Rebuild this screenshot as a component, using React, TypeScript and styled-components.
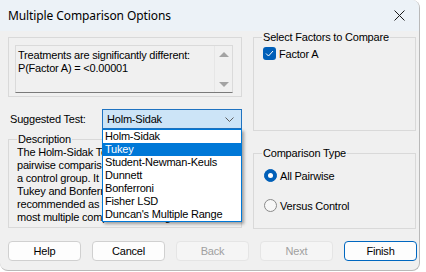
import React from "react";
import styled, {createGlobalStyle} from "styled-components";

const GlobalStyle = createGlobalStyle`
  html, body {
    margin: 0;
    padding: 0;
    background: #ffffff;
  }
  body {
    font-family: "Liberation Sans", Arial, sans-serif;
    font-size: 11px;
    color: #000000;
  }
`

const Window = styled.div`
  width: 420px;
  height: 271px;
  box-sizing: border-box;
  display: flex;
  flex-direction: column;
  background: #f0f0f0;
  border-right: 1px solid #b9b9b9;
  border-bottom: 1px solid #b9b9b9;
  border-radius: 0 8px 8px 8px;
  overflow: hidden;
  letter-spacing: -0.2px;
`

const TitleBar = styled.div`
  height: 31px;
  flex: none;
  display: flex;
  align-items: center;
  justify-content: space-between;
  padding: 0 10px 0 8px;
  background: #ecf2f7;
  font-family: "Noto Sans", "Open Sans", sans-serif;
  font-size: 12px;
  letter-spacing: -0.1px;
`

const CloseButton = styled.div`
  width: 20px;
  height: 20px;
  display: flex;
  align-items: center;
  justify-content: center;
`

const Body = styled.div`
  display: grid;
  grid-template-columns: 234px 163px;
  column-gap: 11px;
  padding: 0 0 0 8px;
`

const LeftColumn = styled.div`
  display: flex;
  flex-direction: column;
  padding-top: 6px;
`

const RightColumn = styled.div`
  display: flex;
  flex-direction: column;
`

const ResultsFrame = styled.div`
  height: 60px;
  box-sizing: border-box;
  border: 1px solid #d9d9d9;
  padding: 7px 8px 3px 6px;
`

const ResultsBox = styled.div`
  height: 48px;
  box-sizing: border-box;
  display: flex;
  border: 1px solid #dadada;
  border-bottom-color: #7a7a7a;
`

const ResultsText = styled.div`
  flex: 1;
  padding: 3px 0 0 2px;
  line-height: 13px;
`

const ScrollBar = styled.div`
  width: 17px;
  display: flex;
  flex-direction: column;
  justify-content: space-between;
  align-items: center;
  padding: 6px 0 5px;
  border-left: 1px solid #e6e6e6;
`

const Arrow = styled.div<{ $down?: boolean }>`
  width: 0;
  height: 0;
  border-left: 5px solid transparent;
  border-right: 5px solid transparent;
  ${p => p.$down ? "border-top: 5px solid #a3a3a3;" : "border-bottom: 5px solid #a3a3a3;"}
`

const TestRow = styled.div`
  display: flex;
  align-items: center;
  margin-top: 12px;
  padding-left: 2px;
`

const TestLabel = styled.span`
  width: 92px;
`

const ComboWrap = styled.div`
  position: relative;
  width: 140px;
  z-index: 2;
`

const Combo = styled.div`
  height: 20px;
  box-sizing: border-box;
  display: flex;
  align-items: center;
  justify-content: space-between;
  padding: 0 7px 0 4px;
  background: #cce4f7;
  border: 1px solid #1f73c1;
`

const DropList = styled.ul`
  position: absolute;
  top: 100%;
  left: 0;
  width: 140px;
  box-sizing: border-box;
  margin: 0;
  padding: 0;
  list-style: none;
  background: #ffffff;
  border: 1px solid #0078d7;
  box-shadow: 2px 2px 3px rgba(0, 0, 0, 0.35);
`

const DropItem = styled.li<{ $selected?: boolean }>`
  height: 13px;
  line-height: 13px;
  padding-left: 2px;
  background: ${p => p.$selected ? "#0078d7" : "transparent"};
  color: ${p => p.$selected ? "#ffffff" : "#000000"};
  white-space: nowrap;
`

const Group = styled.fieldset<{ $height: number }>`
  margin: 0;
  height: ${p => p.$height}px;
  box-sizing: border-box;
  padding: 0 8px;
  border: 1px solid #d9d9d9;
  min-width: 0;
`

const Legend = styled.legend`
  padding: 0 1px;
  line-height: 12px;
`

const DescriptionGroup = styled(Group)`
  margin-top: 4px;
`

const DescriptionText = styled.div`
  margin-top: 1px;
  line-height: 13px;
  white-space: nowrap;
  overflow: hidden;
`

const CheckRow = styled.label`
  display: flex;
  align-items: center;
  gap: 3px;
  margin-top: 4px;
  padding-left: 1px;
`

const CheckBox = styled.span`
  width: 13px;
  height: 13px;
  border-radius: 3px;
  background: #005fb8;
  display: flex;
  align-items: center;
  justify-content: center;
`

const ComparisonGroup = styled(Group)`
  margin-top: 16px;
`

const RadioList = styled.div`
  display: flex;
  flex-direction: column;
  gap: 17px;
  margin-top: 10px;
  padding-left: 2px;
`

const RadioRow = styled.label`
  display: flex;
  align-items: center;
  gap: 3px;
  height: 13px;
`

const Radio = styled.span<{ $checked?: boolean }>`
  width: 13px;
  height: 13px;
  box-sizing: border-box;
  border-radius: 50%;
  display: flex;
  align-items: center;
  justify-content: center;
  background: ${p => p.$checked ? "#005fb8" : "#f7f7f7"};
  border: 1px solid ${p => p.$checked ? "#005fb8" : "#8a8a8a"};

  &::after {
    content: "";
    width: 5px;
    height: 5px;
    border-radius: 50%;
    background: #ffffff;
    display: ${p => p.$checked ? "block" : "none"};
  }
`

const ButtonRow = styled.div`
  display: flex;
  gap: 11px;
  padding: 12px 0 0 8px;
`

const Button = styled.button<{ $default?: boolean }>`
  width: 73px;
  height: 20px;
  box-sizing: border-box;
  padding: 0;
  font: inherit;
  letter-spacing: inherit;
  border-radius: 4px;
  background: #fdfdfd;
  color: #000000;
  border: 1px solid ${p => p.$default ? "#0067c0" : "#d0d0d0"};

  &:disabled {
    background: #f5f5f5;
    border-color: #e5e5e5;
    color: #a0a0a0;
  }
`

const tests = [
  "Holm-Sidak",
  "Tukey",
  "Student-Newman-Keuls",
  "Dunnett",
  "Bonferroni",
  "Fisher LSD",
  "Duncan's Multiple Range",
]

const description = [
  "The Holm-Sidak Test can be used for both",
  "pairwise comparisons and comparisons versus",
  "a control group. It is more powerful than the",
  "Tukey and Bonferroni tests and, thus, is",
  "recommended as the first-line procedure for",
  "most multiple comparison testing.",
]

export default function App() {
  return <>
    <GlobalStyle/>
    <Window>
      <TitleBar>
        <span>Multiple Comparison Options</span>
        <CloseButton>
          <svg width="11" height="11" viewBox="0 0 11 11">
            <path d="M0.5 0.5 L10.5 10.5 M10.5 0.5 L0.5 10.5" stroke="#1b1b1b" strokeWidth="1"/>
          </svg>
        </CloseButton>
      </TitleBar>
      <Body>
        <LeftColumn>
          <ResultsFrame>
            <ResultsBox>
              <ResultsText>
                Treatments are significantly different:<br/>
                P(Factor A) = &lt;0.00001
              </ResultsText>
              <ScrollBar>
                <Arrow/>
                <Arrow $down/>
              </ScrollBar>
            </ResultsBox>
          </ResultsFrame>
          <TestRow>
            <TestLabel>Suggested Test:</TestLabel>
            <ComboWrap>
              <Combo>
                <span>Holm-Sidak</span>
                <svg width="9" height="5" viewBox="0 0 9 5">
                  <path d="M0.5 0.5 L4.5 4.5 L8.5 0.5" fill="none" stroke="#5c5c5c" strokeWidth="1"/>
                </svg>
              </Combo>
              <DropList>
                {tests.map(t => <DropItem key={t} $selected={t === "Tukey"}>{t}</DropItem>)}
              </DropList>
            </ComboWrap>
          </TestRow>
          <DescriptionGroup $height={95}>
            <Legend>Description</Legend>
            <DescriptionText>
              {description.map(line => <div key={line}>{line}</div>)}
            </DescriptionText>
          </DescriptionGroup>
        </LeftColumn>
        <RightColumn>
          <Group $height={100}>
            <Legend>Select Factors to Compare</Legend>
            <CheckRow>
              <CheckBox>
                <svg width="9" height="7" viewBox="0 0 9 7">
                  <path d="M1 3.5 L3.5 6 L8 1" fill="none" stroke="#ffffff" strokeWidth="1"/>
                </svg>
              </CheckBox>
              <span>Factor A</span>
            </CheckRow>
          </Group>
          <ComparisonGroup $height={82}>
            <Legend>Comparison Type</Legend>
            <RadioList>
              <RadioRow><Radio $checked/>All Pairwise</RadioRow>
              <RadioRow><Radio/>Versus Control</RadioRow>
            </RadioList>
          </ComparisonGroup>
        </RightColumn>
      </Body>
      <ButtonRow>
        <Button>Help</Button>
        <Button>Cancel</Button>
        <Button disabled>Back</Button>
        <Button disabled>Next</Button>
        <Button $default>Finish</Button>
      </ButtonRow>
    </Window>
  </>
}
